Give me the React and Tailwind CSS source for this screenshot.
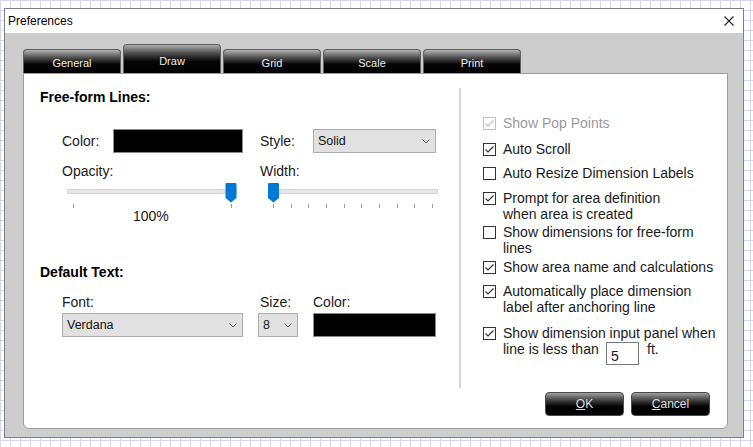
import React from 'react';

const Tab = ({ label, active }) => (
  <div
    className={
      active
        ? 'w-[98px] h-[29px] rounded-t-[4px] border border-b-0 border-[#5e5e5e] bg-[linear-gradient(to_bottom,#b0b0b0_0%,#4a4a4a_30%,#060606_58%,#000_100%)] text-[#ececec] text-[11px] leading-[14px] text-center pt-[9px]'
        : 'w-[98px] h-[24px] rounded-t-[4px] border border-b-0 border-[#5e5e5e] bg-[linear-gradient(to_bottom,#b4b4b4_0%,#4a4a4a_35%,#060606_62%,#000_100%)] text-[#ececec] text-[11px] leading-[14px] text-center pt-[6px]'
    }
  >
    {label}
  </div>
);

const Chevron = () => (
  <svg width="8" height="5" viewBox="0 0 8 5" className="shrink-0">
    <polyline points="0.5,0.5 4,4 7.5,0.5" fill="none" stroke="#606060" strokeWidth="1" />
  </svg>
);

const Select = ({ className, value }) => (
  <div className={`${className} h-[24px] bg-[#e1e1e1] border border-[#adadad] flex items-center justify-between pl-[4px] pr-[5px] text-[12.5px] text-[#111]`}>
    <span>{value}</span>
    <Chevron />
  </div>
);

// slider drawn as a little control: track, ticks, blue thumb
const Slider = ({ thumb, ticks }) => (
  <svg width="172" height="25" viewBox="0 0 172 25" className="block shrink-0">
    <rect x="1.5" y="6.5" width="169" height="4" fill="#e7e7e7" stroke="#d6d6d6" />
    {ticks.map((x) => (
      <line key={x} x1={x + 0.5} x2={x + 0.5} y1="21" y2="25" stroke="#9a9a9a" />
    ))}
    <path d={`M${thumb} 1 Q${thumb} 0 ${thumb + 1} 0 H${thumb + 10} Q${thumb + 11} 0 ${thumb + 11} 1 V15 L${thumb + 5.5} 19.5 L${thumb} 15 Z`} fill="#0078d7" />
  </svg>
);

const Box = ({ checked, disabled }) => {
  const c = disabled ? '#c2c2c2' : '#333333';
  return (
    <svg width="13" height="13" viewBox="0 0 13 13" className="shrink-0 mt-[2px]">
      <rect x="0.5" y="0.5" width="12" height="12" fill="#fff" stroke={c} />
      {checked && <polyline points="2.5,6.5 5,9 10.5,3.5" fill="none" stroke={c} strokeWidth="1.2" />}
    </svg>
  );
};

const CheckRow = ({ checked, disabled, className = '', children }) => (
  <div className={`flex items-start gap-[7px] text-[14px] leading-[16px] whitespace-nowrap ${className}`}>
    <Box checked={checked} disabled={disabled} />
    <div className={disabled ? 'text-[#9a9a9a]' : 'text-[#1a1a1a]'}>{children}</div>
  </div>
);

const DarkButton = ({ children }) => (
  <div className="w-[79px] h-[24px] rounded-[4px] border border-[#4a4a4a] bg-[linear-gradient(to_bottom,#a0a0a0_0%,#3c3c3c_35%,#050505_60%,#000_100%)] text-[#dedede] text-[12px] flex items-center justify-center">
    {children}
  </div>
);

export default function App() {
  const widthTicks = [6, 24, 41, 59, 77, 94, 112, 130, 147, 165];

  return (
    <div className="w-[753px] h-[447px] overflow-hidden bg-white bg-[linear-gradient(to_right,#d4d4f5_1px,transparent_1px),linear-gradient(to_bottom,#d4d4f5_1px,transparent_1px)] bg-[size:10px_10px] pl-[4px] pt-[8px] font-['Liberation_Sans',Arial,sans-serif] text-[#1a1a1a]">
      <div className="w-[740px] h-[430px] border border-[#7f7f7f] flex flex-col bg-[#cdcdcd]">
        {/* title bar */}
        <div className="h-[24px] bg-white flex items-center justify-between pl-[3px] pr-[9px]">
          <span className="text-[12px] text-black">Preferences</span>
          <svg width="10" height="10" viewBox="0 0 10 10">
            <path d="M0.5 0.5 L9.5 9.5 M9.5 0.5 L0.5 9.5" stroke="#222" strokeWidth="1.1" />
          </svg>
        </div>

        <div className="flex-1 pl-[18px] pt-[11px]">
          {/* tabs */}
          <div className="flex items-end gap-[2px]">
            <Tab label="General" />
            <Tab label="Draw" active />
            <Tab label="Grid" />
            <Tab label="Scale" />
            <Tab label="Print" />
          </div>

          {/* panel */}
          <div className="w-[705px] h-[356px] bg-white border border-[#9c9c9c] rounded-b-[6px] flex">
            {/* left */}
            <div className="w-[435px] flex flex-col">
              <div className="ml-[16px] mt-[15px] text-[14px] font-bold leading-[16px] text-black">Free-form Lines:</div>

              <div className="mt-[24px] ml-[38px] flex items-center h-[24px] text-[14px]">
                <span className="w-[51px]">Color:</span>
                <div className="w-[130px] h-[24px] bg-black border border-[#8c8c8c]" />
                <span className="ml-[17px] w-[53px]">Style:</span>
                <Select className="w-[123px]" value="Solid" />
              </div>

              <div className="mt-[10px] ml-[38px] flex text-[14px] leading-[16px]">
                <span className="w-[198px]">Opacity:</span>
                <span>Width:</span>
              </div>

              <div className="mt-[4px] ml-[42px] flex gap-[29px]">
                <Slider thumb={159.5} ticks={[7, 165]} />
                <Slider thumb={1} ticks={widthTicks} />
              </div>

              <div className="ml-[109px] text-[14px] leading-[16px]">100%</div>

              <div className="ml-[16px] mt-[40px] text-[14px] font-bold leading-[16px] text-black">Default Text:</div>

              <div className="mt-[14px] ml-[38px] flex text-[14px] leading-[16px]">
                <span className="w-[198px]">Font:</span>
                <span className="w-[53px]">Size:</span>
                <span>Color:</span>
              </div>

              <div className="mt-[3px] ml-[38px] flex items-center">
                <Select className="w-[181px]" value="Verdana" />
                <Select className="w-[40px] ml-[15px]" value="8" />
                <div className="ml-[15px] w-[123px] h-[24px] bg-black border border-[#8c8c8c]" />
              </div>
            </div>

            {/* divider */}
            <div className="w-[2px] h-[300px] mt-[14px] bg-[#d6d6d6]" />

            {/* right */}
            <div className="flex-1 flex flex-col pl-[22px]">
              <CheckRow checked disabled className="mt-[41px]">Show Pop Points</CheckRow>
              <CheckRow checked className="mt-[10px]">Auto Scroll</CheckRow>
              <CheckRow className="mt-[8px]">Auto Resize Dimension Labels</CheckRow>
              <CheckRow checked className="mt-[9px]">
                Prompt for area definition
                <br />
                when area is created
              </CheckRow>
              <CheckRow className="mt-[2px]">
                Show dimensions for free-form
                <br />
                lines
              </CheckRow>
              <CheckRow checked className="mt-[3px]">Show area name and calculations</CheckRow>
              <CheckRow checked className="mt-[8px]">
                Automatically place dimension
                <br />
                label after anchoring line
              </CheckRow>
              <CheckRow checked className="mt-[10px]">
                Show dimension input panel when
                <div className="flex items-start">
                  <span className="w-[103px]">line is less than</span>
                  <div className="mt-[1px] w-[33px] h-[23px] border border-[#7a7a7a] bg-white pl-[4px] pt-[5px] text-[14px] leading-[16px]">5</div>
                  <span className="ml-[8px]">ft.</span>
                </div>
              </CheckRow>

              <div className="mt-[27px] flex justify-end gap-[7px] pr-[17px]">
                <DarkButton>
                  <span className="underline">O</span>K
                </DarkButton>
                <DarkButton>
                  <span className="underline">C</span>ancel
                </DarkButton>
              </div>
            </div>
          </div>
        </div>
      </div>
    </div>
  );
}
